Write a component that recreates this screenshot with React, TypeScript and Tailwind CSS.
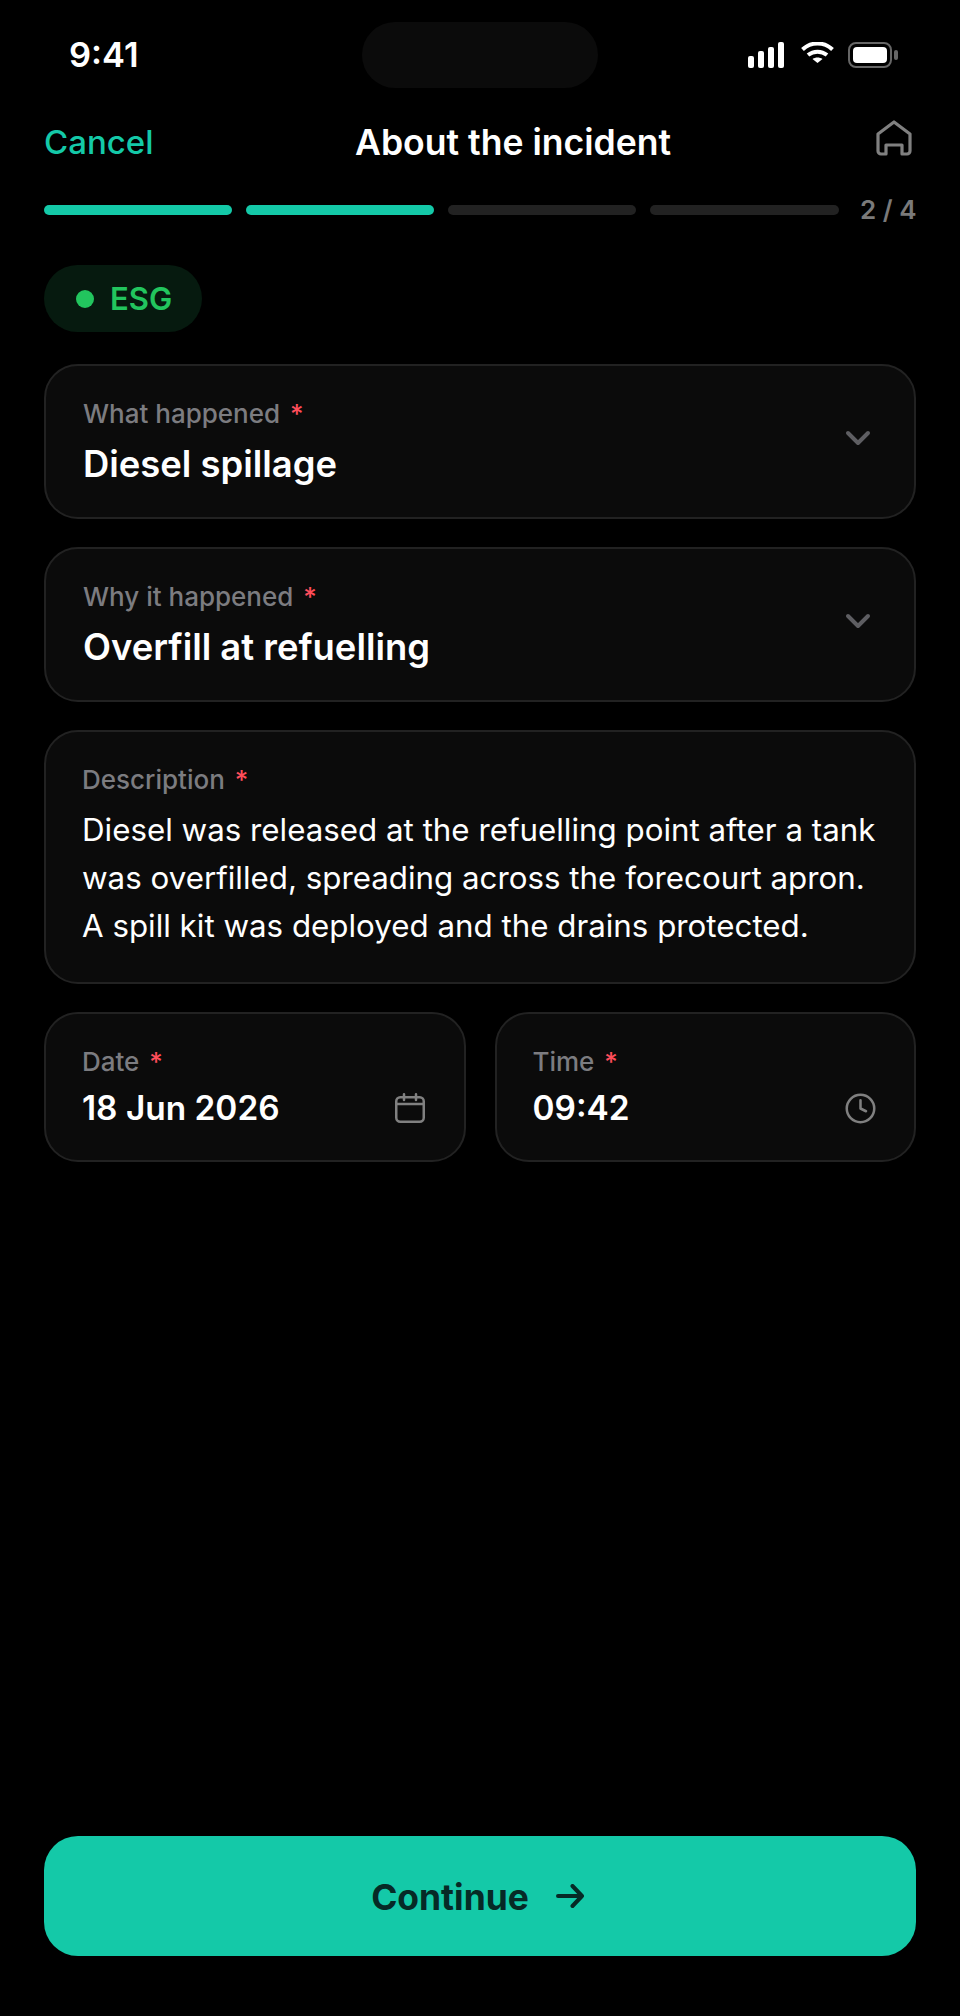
import { ChevronDown, Clock } from "lucide-react";

// Top status bar icons
function StatusIcons() {
    return (
        <div className="flex items-center">
            <svg width="36" height="26" viewBox="0 0 36 26" fill="#fff">
                <rect x="0" y="14" width="6" height="12" rx="2" />
                <rect x="10" y="9" width="6" height="17" rx="2" />
                <rect x="20" y="5" width="6" height="21" rx="2" />
                <rect x="30" y="0" width="6" height="26" rx="2" />
            </svg>
            <svg className="ml-[17px] mb-[5px]" width="33" height="21" viewBox="0 0 33 21" fill="none" stroke="#fff" strokeWidth="4">
                <path d="M1.5 7.5C10 -0.5 23 -0.5 31.5 7.5" />
                <path d="M7 13C12.5 8.5 20.5 8.5 26 13" />
                <path d="M16.5 21L11.5 17C14.5 15 18.5 15 21.5 17Z" fill="#fff" stroke="none" />
            </svg>
            <div className="ml-[14px] flex items-center">
                <div className="w-[44px] h-[26px] rounded-[8px] border-2 border-[#666666] p-[3px]">
                    <div className="w-full h-full rounded-[4px] bg-white" />
                </div>
                <div className="ml-[2px] w-[4px] h-[10px] rounded-[2px] bg-[#666666]" />
            </div>
        </div>
    );
}

function Label({ text }: { text: string }) {
    return (
        <div className="text-[26px] leading-[30px] font-[550] text-[#7c7c80]">
            {text} <span className="text-[#ff4d5a] ml-[3px]">*</span>
        </div>
    );
}

function SelectCard({ label, value }: { label: string; value: string }) {
    return (
        <div className="h-[155px] rounded-[34px] border-2 border-[#222222] bg-[#0b0b0b] pl-[37px] pr-[36px] pt-[33px] flex justify-between">
            <div>
                <Label text={label} />
                <div className="mt-[12px] text-[36.4px] leading-[46px] font-semibold text-white">{value}</div>
            </div>
            <ChevronDown className="mt-[19px] text-[#5e5e62]" size={40} strokeWidth={2.4} />
        </div>
    );
}

export default function App() {
    return (
        <div className="w-[960px] h-[2016px] bg-black text-white flex flex-col px-[44px] font-['Inter',sans-serif]">
            {/* status bar */}
            <div className="h-[66px] mt-[22px] flex items-center">
                <div className="w-[318px] shrink-0 pl-[25px] text-[34.5px] font-semibold leading-none">9:41</div>
                <div className="w-[236px] h-[66px] rounded-full bg-[#0b0b0b]" />
                <div className="w-[318px] shrink-0 flex justify-end pr-[18px]">
                    <StatusIcons />
                </div>
            </div>

            {/* nav row */}
            <div className="mt-[30px] h-[50px] flex items-center justify-between relative">
                <span className="text-[33px] font-medium text-[#14c9a8]">Cancel</span>
                <span className="absolute left-[311px] text-[35.6px] font-semibold">About the incident</span>
                <svg width="36" height="36" viewBox="0 0 36 36" fill="none" stroke="#808080" strokeWidth="3.2" strokeLinejoin="round" strokeLinecap="round" className="self-start mt-[2px] mr-[4px]">
                    <path d="M2 14L18 2L34 14V31A3 3 0 0 1 31 34H26V25H10V34H5A3 3 0 0 1 2 31Z" />
                </svg>
            </div>

            {/* step progress */}
            <div className="mt-[37px] flex items-center gap-[14px]">
                <div className="shrink-0 w-[188px] h-[10px] rounded-full bg-[#14c9a8]" />
                <div className="shrink-0 w-[188px] h-[10px] rounded-full bg-[#14c9a8]" />
                <div className="shrink-0 w-[188px] h-[10px] rounded-full bg-[#222222]" />
                <div className="shrink-0 w-[189px] h-[10px] rounded-full bg-[#222222]" />
                <span className="ml-[7px] text-[26px] leading-[10px] font-semibold text-[#7a7a7a] whitespace-nowrap">2 / 4</span>
            </div>

            {/* category pill */}
            <div className="mt-[50px] self-start h-[67px] w-[158px] rounded-full bg-[#061a0f] flex items-center pl-[32px]">
                <span className="w-[18px] h-[18px] rounded-full bg-[#22c55e]" />
                <span className="ml-[16px] pt-[2px] text-[31px] font-semibold text-[#22c55e]">ESG</span>
            </div>

            <div className="mt-[32px] flex flex-col gap-[28px]">
                <SelectCard label="What happened" value="Diesel spillage" />
                <SelectCard label="Why it happened" value="Overfill at refuelling" />

                <div className="h-[254px] rounded-[34px] border-2 border-[#222222] bg-[#0b0b0b] pl-[36px] pr-[30px] pt-[33px]">
                    <Label text="Description" />
                    <p className="mt-[11px] text-[31.3px] leading-[48px] text-white">
                        Diesel was released at the refuelling point after a tank was overfilled, spreading across the forecourt apron. A spill kit was deployed and the drains protected.
                    </p>
                </div>

                <div className="grid grid-cols-2 gap-[29px]">
                    <div className="h-[150px] rounded-[34px] border-2 border-[#222222] bg-[#0b0b0b] pl-[36px] pr-[39px] pt-[33px]">
                        <Label text="Date" />
                        <div className="mt-[8px] flex items-center justify-between">
                            <span className="text-[33.4px] leading-[46px] font-semibold">18 Jun 2026</span>
                            <svg width="30" height="30" viewBox="0 0 30 30" fill="none" stroke="#808080" strokeWidth="2.5" strokeLinecap="round">
                                <rect x="1.25" y="4.25" width="27.5" height="24.5" rx="4" />
                                <path d="M1.25 11H28.75M9 1.25V7M21 1.25V7" />
                            </svg>
                        </div>
                    </div>
                    <div className="h-[150px] rounded-[34px] border-2 border-[#222222] bg-[#0b0b0b] pl-[36px] pr-[37px] pt-[33px]">
                        <Label text="Time" />
                        <div className="mt-[8px] flex items-center justify-between">
                            <span className="text-[33.4px] leading-[46px] font-semibold">09:42</span>
                            <Clock size={33} strokeWidth={1.83} className="text-[#808080]" />
                        </div>
                    </div>
                </div>
            </div>

            <button className="mt-auto mb-[60px] h-[120px] rounded-[34px] bg-[#14c9a8] flex items-center justify-center gap-[27px] pr-[5px] text-[#062a26]">
                <span className="pt-[3px] text-[35.4px] font-bold">Continue</span>
                <svg width="28" height="24" viewBox="0 0 28 24" fill="none" stroke="currentColor" strokeWidth="4" strokeLinecap="round" strokeLinejoin="round">
                    <path d="M2 12H26M16.5 2L26 12L16.5 22" />
                </svg>
            </button>
        </div>
    );
}
